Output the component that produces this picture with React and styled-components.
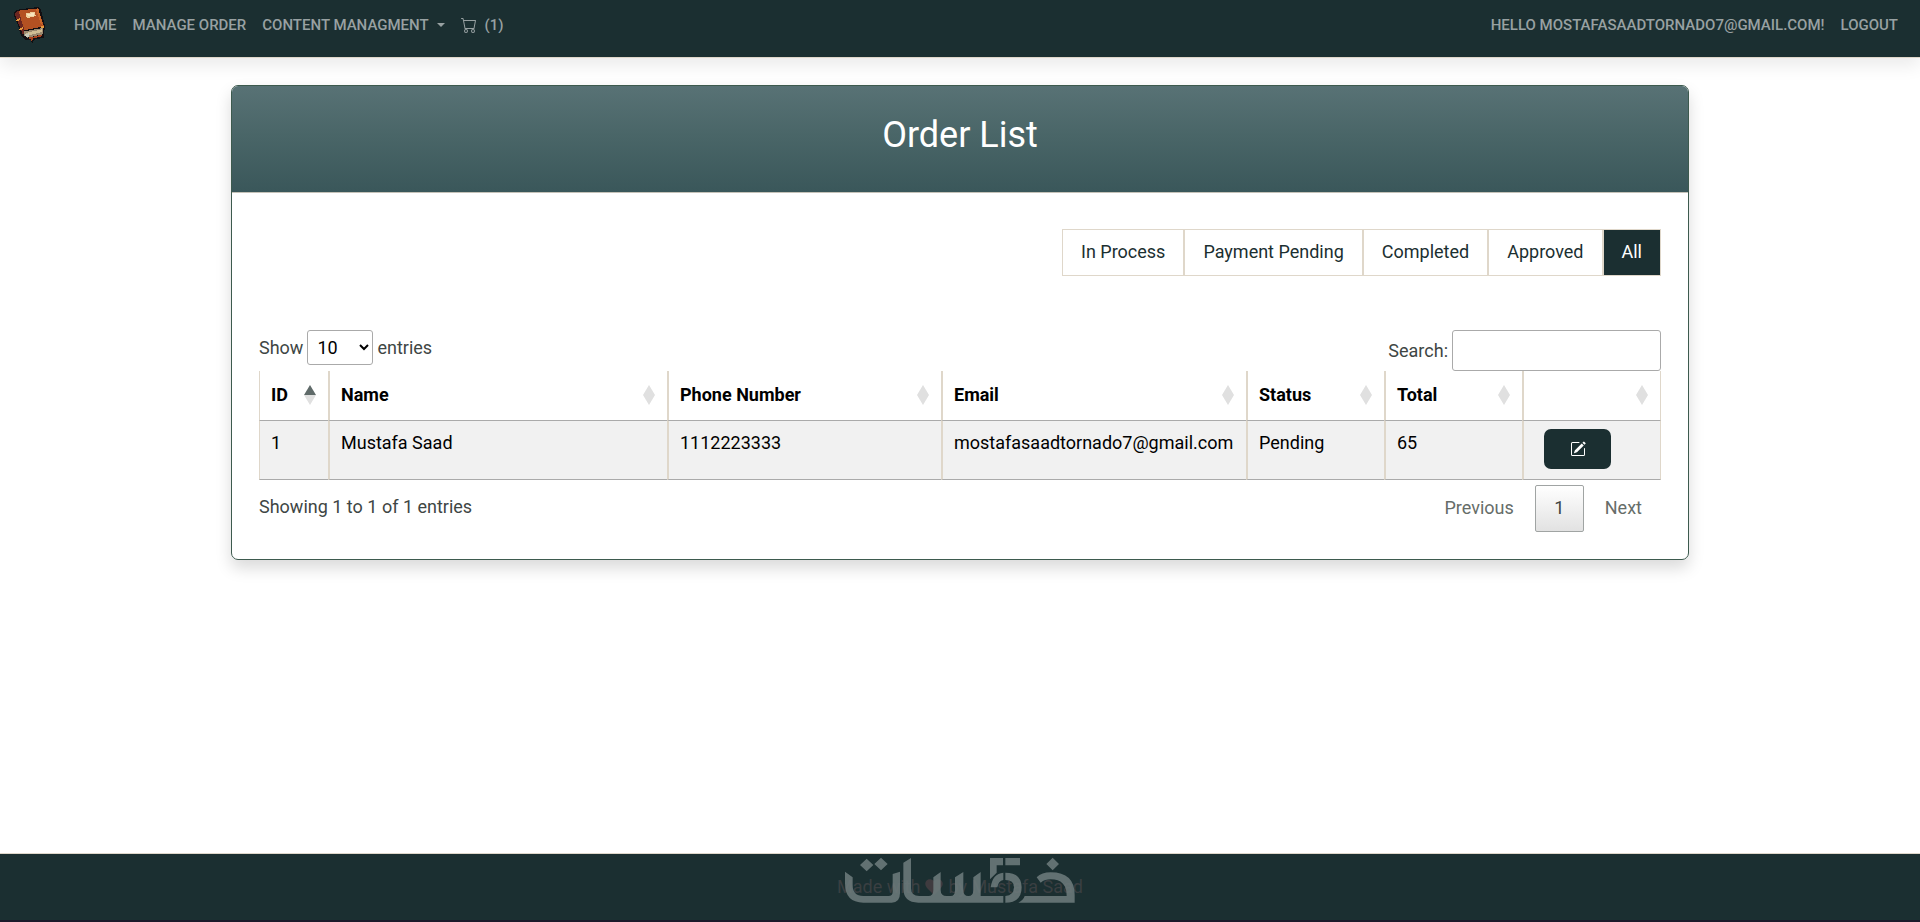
import React from "react";
import styled, { createGlobalStyle } from "styled-components";

const GlobalStyle = createGlobalStyle`
  *, *::before, *::after { box-sizing: border-box; }
  body {
    margin: 0;
    background: #fff;
    color: #3e4644;
    font-family: Roboto, "Liberation Sans", sans-serif;
    font-size: 18px;
    line-height: 27px;
  }
  button, input, select { font: inherit; }
`;

const Page = styled.div`
  min-height: 100vh;
  display: flex;
  flex-direction: column;
`;

const NavBar = styled.nav`
  display: flex;
  justify-content: space-between;
  align-items: flex-start;
  height: 58px;
  padding: 4px 14px;
  background: #1b2f31;
  border-bottom: 1px solid #dfd7ca;
  box-shadow: 0 8px 16px rgba(0, 0, 0, 0.08);
`;

const NavGroup = styled.div`
  display: flex;
  align-items: center;
  height: 42px;
`;

const Brand = styled.a`
  display: flex;
  margin-right: 19px;
`;

const NavLink = styled.a`
  display: flex;
  align-items: center;
  gap: 8px;
  padding: 0 8px;
  color: #98a1a2;
  font-size: 15px;
  font-weight: 500;
  line-height: 24px;
  text-decoration: none;
  text-transform: uppercase;
`;

const Caret = styled.span`
  border: 4px solid transparent;
  border-top-color: currentColor;
  border-bottom: 0;
`;

const Main = styled.main`
  flex: 1;
  padding: 27px 16px;
`;

const Card = styled.section`
  max-width: 1458px;
  margin: 0 auto;
  border: 1px solid #3d5a4e;
  border-radius: 7px;
  overflow: hidden;
  box-shadow: 0 8px 16px rgba(0, 0, 0, 0.15);
`;

const CardHeader = styled.header`
  padding: 28px 0 35px;
  border-bottom: 1px solid #c5c2b8;
  background: linear-gradient(#587275, #4a6668 45%, #3a575a);
`;

const Title = styled.h1`
  margin: 0;
  color: #fff;
  font-size: 36px;
  font-weight: 400;
  line-height: 43px;
  text-align: center;
`;

const CardBody = styled.div`
  padding: 36px 27px 27px;
`;

const Filters = styled.div`
  display: flex;
  justify-content: flex-end;
  margin-bottom: 54px;
`;

const FilterLink = styled.a`
  padding: 8px 18px 10px;
  border: 1px solid #dfd7ca;
  background: ${(p) => (p.$active ? "#1b2f31" : "#fff")};
  color: ${(p) => (p.$active ? "#fff" : "#1b2f31")};
  text-decoration: none;
`;

const Controls = styled.div`
  display: flex;
  justify-content: space-between;
  align-items: flex-start;
`;

const Label = styled.label`
  display: flex;
  align-items: center;
  gap: 4px;
`;

const PageSize = styled.select`
  height: 35px;
  width: 66px;
  padding: 4px 4px 4px 5px;
  border: 1px solid #aaa;
  border-radius: 3px;
  background: transparent;
  color: #000;
`;

const SearchInput = styled.input`
  width: 209px;
  height: 41px;
  padding: 5px;
  border: 1px solid #aaa;
  border-radius: 3px;
  background: transparent;
`;

const Table = styled.table`
  width: 100%;
  table-layout: fixed;
  border-collapse: separate;
  border-spacing: 0;
  color: #000;
`;

const Col = styled.col`
  width: ${(p) => p.$width};
`;

const cell = `
  border-left: 2px solid #dfd7ca;
  border-bottom: 1px solid #aaa;
  text-align: left;
  &:first-child { border-left-width: 1px; }
  &:last-child { border-right: 1px solid #dfd7ca; }
`;

const HeadCell = styled.th`
  ${cell}
  padding: 10px 12px 12px 11px;
  font-weight: 700;
`;

const HeadContent = styled.div`
  display: flex;
  justify-content: space-between;
  align-items: center;
  min-height: 27px;
`;

const Cell = styled.td`
  ${cell}
  height: 59px;
  padding: 8px 11px;
  vertical-align: top;
  background: #f1f1f1;
`;

const EditButton = styled.button`
  display: flex;
  align-items: center;
  justify-content: center;
  width: 67px;
  height: 40px;
  margin-left: 9px;
  border: 0;
  border-radius: 7px;
  background: #1b2f31;
  color: #fff;
`;

const TableFooter = styled.div`
  display: flex;
  justify-content: space-between;
  align-items: flex-start;
  padding-top: 5px;
`;

const Info = styled.div`
  padding-top: 8px;
`;

const Pager = styled.div`
  display: flex;
  gap: 2px;
`;

const PageButton = styled.button`
  min-width: 49px;
  height: 47px;
  padding: 0 18px 2px;
  border: 1px solid ${(p) => (p.$current ? "#a0a4a3" : "transparent")};
  border-radius: 2px;
  background: ${(p) => (p.$current ? "linear-gradient(#fff, #e2e2e2)" : "transparent")};
  color: ${(p) => (p.$current ? "#3e4644" : "#666d69")};
`;

const Footer = styled.footer`
  position: relative;
  height: 69px;
  padding-top: 19px;
  border-top: 1px solid #dfd7ca;
  border-bottom: 2px solid #1b1a2b;
  background: #1b2f31;
  color: #3a3f42;
  text-align: center;
`;

const Credit = styled.p`
  display: flex;
  align-items: center;
  justify-content: center;
  gap: 5px;
  margin: 0;
`;

const Watermark = styled.svg`
  position: absolute;
  top: 0;
  left: 50%;
  transform: translateX(-50%);
  opacity: 0.85;
`;

const BookLogo = () => (
  <svg width="33" height="36" viewBox="0 0 99 108" shapeRendering="crispEdges" aria-hidden="true">
    <path d="M0 18L10 8L72 0L80 5L94 62L90 72V92L60 98L55 108L48 98L32 98L22 88L12 56L1 28Z" fill="#120f12" />
    <path d="M4 18L13 10L30 66L28 86L18 62L4 26Z" fill="#6b2620" />
    <path d="M14 11L72 4L90 58L31 70Z" fill="#b45122" />
    <path d="M66 5L73 5L77 18L87 56L80 50L70 20Z" fill="#cb6729" />
    <path d="M35 19L61 14L66 27L39 34Z" fill="#efcf9a" />
    <path d="M40 22L60 18L62 25L44 28Z" fill="#f7e4bd" />
    <path d="M31 73L86 63L87 82L39 92L29 84Z" fill="#9b8a70" />
    <path d="M35 78L83 67L84 75L40 86Z" fill="#d0bd94" />
    <path d="M33 82L46 78L44 91L36 90Z" fill="#c9cabb" />
    <path d="M6 40L18 33V38L8 44ZM15 66L28 60V66L18 71ZM78 60L88 56L90 62L82 63Z" fill="#e79a3c" />
    <path d="M39 93L84 83V88L58 94L53 103L49 96Z" fill="#a8431f" />
  </svg>
);

const CartIcon = () => (
  <svg width="16" height="16" viewBox="0 0 16 16" fill="currentColor" aria-hidden="true">
    <path d="M0 1.500A.5.5 0 0 1 .5 1H2a.5.5 0 0 1 .485.379L2.890 3H14.500a.5.5 0 0 1 .491.592l-1.500 8A.5.5 0 0 1 13 12H4a.5.5 0 0 1-.491-.408L2.010 3.607 1.610 2H.5a.5.5 0 0 1-.5-.5zM3.102 4l1.313 7h8.170l1.313-7H3.102zM5 12a2 2 0 1 0 0 4 2 2 0 0 0 0-4zm7 0a2 2 0 1 0 0 4 2 2 0 0 0 0-4zm-7 1a1 1 0 1 1 0 2 1 1 0 0 1 0-2zm7 0a1 1 0 1 1 0 2 1 1 0 0 1 0-2z" />
  </svg>
);

const EditIcon = () => (
  <svg width="16" height="16" viewBox="0 0 16 16" fill="currentColor" aria-hidden="true">
    <path d="M15.502 1.940a.5.5 0 0 1 0 .706L14.459 3.690l-2-2L13.502.646a.5.5 0 0 1 .707 0l1.293 1.293zm-1.750 2.456-2-2L4.939 9.210a.5.5 0 0 0-.121.196l-.805 2.414a.25.25 0 0 0 .316.316l2.414-.805a.5.5 0 0 0 .196-.12l6.813-6.814z" />
    <path fillRule="evenodd" d="M1 13.500A1.500 1.500 0 0 0 2.500 15h11a1.500 1.500 0 0 0 1.500-1.500v-6a.5.5 0 0 0-1 0v6a.5.5 0 0 1-.5.5h-11a.5.5 0 0 1-.5-.5v-11a.5.5 0 0 1 .5-.5H9a.5.5 0 0 0 0-1H2.500A1.500 1.500 0 0 0 1 2.500v11z" />
  </svg>
);

const HeartIcon = () => (
  <svg width="18" height="16" viewBox="0 0 18 16" aria-hidden="true">
    <path d="M9 16L2 9C-3 3 4-3 9 2C14-3 21 3 16 9Z" fill="#3f3b3f" />
  </svg>
);

const SortIcon = ({ ascending }) => (
  <svg width="12" height="20" viewBox="0 0 12 20" aria-hidden="true">
    <path d="M6 0L12 10H0Z" fill={ascending ? "#5f6a69" : "#e0e0e0"} />
    <path d="M0 10H12L6 20Z" fill="#e0e0e0" />
  </svg>
);

const columns = [
  { label: "ID", width: "69px", ascending: true },
  { label: "Name", width: "auto" },
  { label: "Phone Number", width: "274px" },
  { label: "Email", width: "305px" },
  { label: "Status", width: "138px" },
  { label: "Total", width: "138px" },
  { label: "", width: "139px" },
];

const orders = [
  { id: 1, name: "Mustafa Saad", phone: "1112223333", email: "mostafasaadtornado7@gmail.com", status: "Pending", total: 65 },
];

const filters = ["In Process", "Payment Pending", "Completed", "Approved", "All"];

export default function App() {
  return (
    <Page>
      <GlobalStyle />
      <NavBar>
        <NavGroup>
          <Brand href="#" aria-label="Book store"><BookLogo /></Brand>
          <NavLink href="#">Home</NavLink>
          <NavLink href="#">Manage Order</NavLink>
          <NavLink href="#">Content Managment <Caret /></NavLink>
          <NavLink href="#"><CartIcon /> (1)</NavLink>
        </NavGroup>
        <NavGroup>
          <NavLink href="#">Hello mostafasaadtornado7@gmail.com!</NavLink>
          <NavLink href="#">Logout</NavLink>
        </NavGroup>
      </NavBar>

      <Main>
        <Card>
          <CardHeader><Title>Order List</Title></CardHeader>
          <CardBody>
            <Filters>
              {filters.map((name) => (
                <FilterLink key={name} href="#" $active={name === "All"}>{name}</FilterLink>
              ))}
            </Filters>
            <Controls>
              <Label>
                Show
                <PageSize defaultValue="10">
                  <option>10</option>
                  <option>25</option>
                  <option>50</option>
                  <option>100</option>
                </PageSize>
                entries
              </Label>
              <Label>Search:<SearchInput type="search" /></Label>
            </Controls>
            <Table>
              <colgroup>
                {columns.map((c, i) => <Col key={i} $width={c.width} />)}
              </colgroup>
              <thead>
                <tr>
                  {columns.map((c, i) => (
                    <HeadCell key={i}>
                      <HeadContent><span>{c.label}</span><SortIcon ascending={c.ascending} /></HeadContent>
                    </HeadCell>
                  ))}
                </tr>
              </thead>
              <tbody>
                {orders.map((o) => (
                  <tr key={o.id}>
                    <Cell>{o.id}</Cell>
                    <Cell>{o.name}</Cell>
                    <Cell>{o.phone}</Cell>
                    <Cell>{o.email}</Cell>
                    <Cell>{o.status}</Cell>
                    <Cell>{o.total}</Cell>
                    <Cell><EditButton aria-label="Edit order"><EditIcon /></EditButton></Cell>
                  </tr>
                ))}
              </tbody>
            </Table>
            <TableFooter>
              <Info>Showing 1 to 1 of 1 entries</Info>
              <Pager>
                <PageButton>Previous</PageButton>
                <PageButton $current>1</PageButton>
                <PageButton>Next</PageButton>
              </Pager>
            </TableFooter>
          </CardBody>
        </Card>
      </Main>

      <Footer>
        <Credit>Made with <HeartIcon /> by Mustafa Saad</Credit>
        <Watermark width="240" height="53" viewBox="60 42 720 159" fill="#6f7d7e" aria-hidden="true">
          <path d="M75 95L98 112V135Q98 168 130 168H205Q218 168 218 155V102L240 95V160Q240 188 215 188H130Q75 188 75 130Z" />
          <path d="M140 56L160 75L140 94L120 75ZM183 53L203 72L183 91L163 72Z" />
          <path d="M250 68L273 54V145Q273 168 298 168H325Q340 168 340 150V112L362 96V150Q362 168 380 168H392Q405 168 405 150V112L430 96V150Q430 168 445 168Q460 168 460 150V112L482 96V168H550V188H295Q250 188 250 145Z" />
          <path d="M510 54H549V76H530V98L510 118ZM556 54H600V76H556ZM512 142Q518 100 550 98V120Q535 122 532 142ZM556 98Q605 98 605 142Q605 188 556 188V168Q582 166 582 142Q582 120 556 120Z" />
          <path d="M698 53L717 72L698 91L679 72ZM650 112Q665 97 692 97Q764 97 764 165V188H595Q610 180 614 168H740Q740 118 692 118Q675 118 662 128Z" />
        </Watermark>
      </Footer>
    </Page>
  );
}
